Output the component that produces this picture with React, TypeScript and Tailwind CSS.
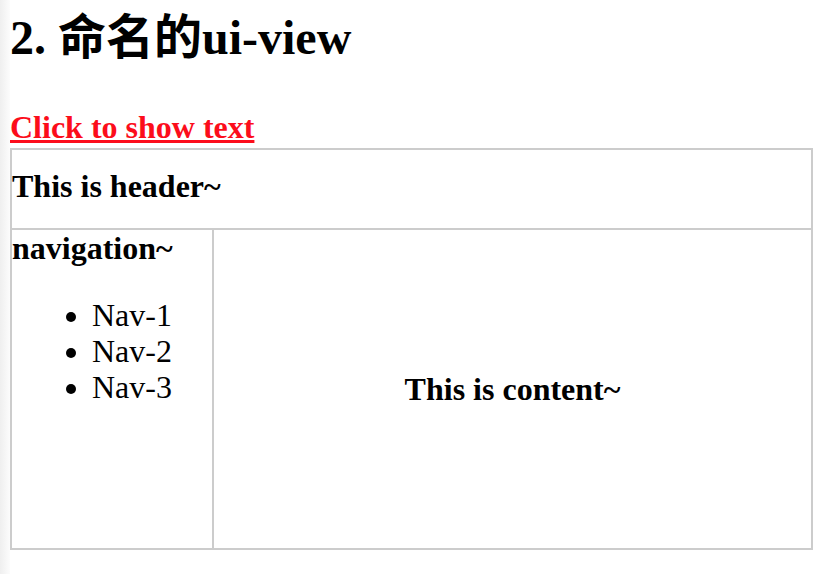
import React from "react";

const navItems = ["Nav-1", "Nav-2", "Nav-3"];

export default function App() {
  return (
    <div className="relative min-h-[574px] w-full bg-white pl-[10px] text-black font-['Liberation_Serif','Noto_Sans_CJK_SC',serif]">
      {/* faint shadow along the left edge */}
      <div className="pointer-events-none absolute left-0 top-0 h-full w-[10px] bg-gradient-to-r from-[#efefef] to-[#fcfcfc]" />

      <h1 className="relative pt-[10px] text-[48px] font-bold leading-[55px]">
        2. 命名的ui-view
      </h1>

      <div className="relative mt-[44px] text-[32px] font-bold leading-[37px]">
        <a href="#" className="text-[#fc0d1b] underline">
          Click to show text
        </a>
      </div>

      {/* layout box */}
      <div className="relative mt-[2px] flex h-[402px] w-[803px] flex-col border-2 border-[#cccccc] bg-white text-[32px]">
        {/* header */}
        <div className="h-[80px] shrink-0 border-b-2 border-[#cccccc] pt-[18px]">
          <h4 className="font-bold leading-[37px]">This is header~</h4>
        </div>

        <div className="flex flex-1">
          {/* navigation */}
          <div className="w-[202px] shrink-0 border-r-2 border-[#cccccc]">
            <h4 className="font-bold leading-[37px]">navigation~</h4>
            <ul className="mt-[30px] list-disc pl-[80px] leading-[36px]">
              {navItems.map((item) => (
                <li key={item}>{item}</li>
              ))}
            </ul>
          </div>

          {/* content */}
          <div className="flex flex-1 items-center justify-center">
            <h4 className="font-bold leading-[37px]">This is content~</h4>
          </div>
        </div>
      </div>
    </div>
  );
}
